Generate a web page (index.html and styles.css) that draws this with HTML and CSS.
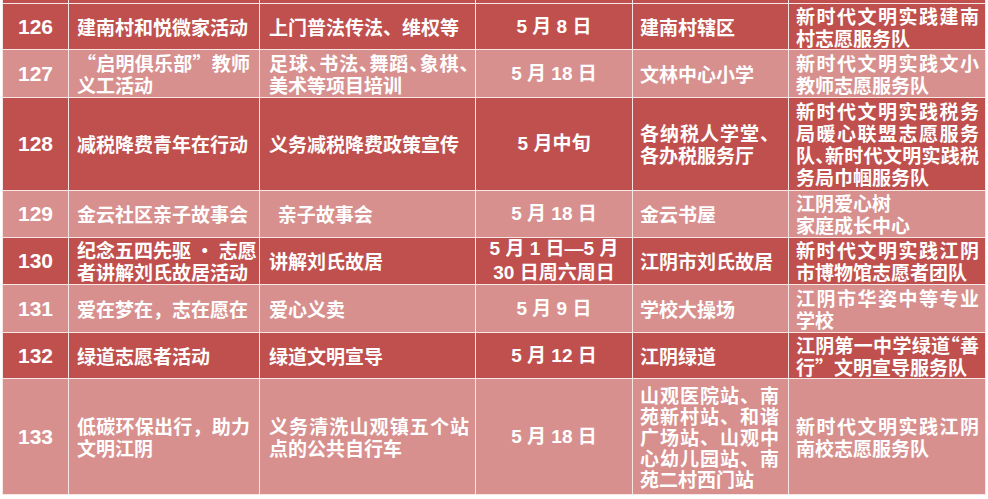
FILE: index.html
```html
<!DOCTYPE html>
<html lang="zh-CN">
<head>
<meta charset="utf-8">
<title>志愿服务活动安排</title>
<link rel="stylesheet" href="styles.css">
</head>
<body>
<div class="tbl">
  <div class="row dk top">
    <div class="c"></div><div class="c"></div><div class="c"></div><div class="c"></div><div class="c"></div><div class="c"></div>
  </div>

  <div class="row dk">
    <div class="c num">126</div>
    <div class="c c2"><div class="t"><span class="ln">建南村和悦微家活动</span></div></div>
    <div class="c c3"><div class="t"><span class="ln">上门普法传法、维权等</span></div></div>
    <div class="c date"><div class="t"><span class="ln">5 月 8 日</span></div></div>
    <div class="c c5"><div class="t"><span class="ln">建南村辖区</span></div></div>
    <div class="c c6"><div class="t"><span class="ln jl">新时代文明实践建南</span><span class="ln">村志愿服务队</span></div></div>
  </div>

  <div class="row lt">
    <div class="c num">127</div>
    <div class="c c2"><div class="t"><span class="ln jl">“启明俱乐部”教师</span><span class="ln">义工活动</span></div></div>
    <div class="c c3"><div class="t"><span class="ln jl hw">足球、书法、舞蹈、象棋、</span><span class="ln">美术等项目培训</span></div></div>
    <div class="c date"><div class="t"><span class="ln">5 月 18 日</span></div></div>
    <div class="c c5"><div class="t"><span class="ln">文林中心小学</span></div></div>
    <div class="c c6"><div class="t"><span class="ln jl">新时代文明实践文小</span><span class="ln">教师志愿服务队</span></div></div>
  </div>

  <div class="row dk">
    <div class="c num">128</div>
    <div class="c c2"><div class="t"><span class="ln">减税降费青年在行动</span></div></div>
    <div class="c c3"><div class="t"><span class="ln">义务减税降费政策宣传</span></div></div>
    <div class="c date"><div class="t"><span class="ln">5 月中旬</span></div></div>
    <div class="c c5"><div class="t"><span class="ln jl">各纳税人学堂、</span><span class="ln">各办税服务厅</span></div></div>
    <div class="c c6"><div class="t"><span class="ln jl">新时代文明实践税务</span><span class="ln jl">局暖心联盟志愿服务</span><span class="ln jl hw">队、新时代文明实践税</span><span class="ln">务局巾帼服务队</span></div></div>
  </div>

  <div class="row lt">
    <div class="c num">129</div>
    <div class="c c2"><div class="t"><span class="ln">金云社区亲子故事会</span></div></div>
    <div class="c c3"><div class="t"><span class="ln">&nbsp;&nbsp;亲子故事会</span></div></div>
    <div class="c date"><div class="t"><span class="ln">5 月 18 日</span></div></div>
    <div class="c c5"><div class="t"><span class="ln">金云书屋</span></div></div>
    <div class="c c6"><div class="t"><span class="ln">江阴爱心树</span><span class="ln">家庭成长中心</span></div></div>
  </div>

  <div class="row dk">
    <div class="c num">130</div>
    <div class="c c2"><div class="t"><span class="ln jl">纪念五四先驱 · 志愿</span><span class="ln">者讲解刘氏故居活动</span></div></div>
    <div class="c c3"><div class="t"><span class="ln">讲解刘氏故居</span></div></div>
    <div class="c date"><div class="t tall"><span class="ln">5 月 1 日—5 月</span><span class="ln">30 日周六周日</span></div></div>
    <div class="c c5"><div class="t"><span class="ln">江阴市刘氏故居</span></div></div>
    <div class="c c6"><div class="t"><span class="ln jl">新时代文明实践江阴</span><span class="ln">市博物馆志愿者团队</span></div></div>
  </div>

  <div class="row lt">
    <div class="c num">131</div>
    <div class="c c2"><div class="t"><span class="ln">爱在梦在，志在愿在</span></div></div>
    <div class="c c3"><div class="t"><span class="ln">爱心义卖</span></div></div>
    <div class="c date"><div class="t"><span class="ln">5 月 9 日</span></div></div>
    <div class="c c5"><div class="t"><span class="ln">学校大操场</span></div></div>
    <div class="c c6"><div class="t"><span class="ln jl">江阴市华姿中等专业</span><span class="ln">学校</span></div></div>
  </div>

  <div class="row dk">
    <div class="c num">132</div>
    <div class="c c2"><div class="t"><span class="ln">绿道志愿者活动</span></div></div>
    <div class="c c3"><div class="t"><span class="ln">绿道文明宣导</span></div></div>
    <div class="c date"><div class="t"><span class="ln">5 月 12 日</span></div></div>
    <div class="c c5"><div class="t"><span class="ln">江阴绿道</span></div></div>
    <div class="c c6"><div class="t"><span class="ln jl hw">江阴第一中学绿道“善</span><span class="ln">行”文明宣导服务队</span></div></div>
  </div>

  <div class="row lt">
    <div class="c num">133</div>
    <div class="c c2"><div class="t"><span class="ln jl">低碳环保出行，助力</span><span class="ln">文明江阴</span></div></div>
    <div class="c c3"><div class="t"><span class="ln jl">义务清洗山观镇五个站</span><span class="ln">点的公共自行车</span></div></div>
    <div class="c date"><div class="t"><span class="ln">5 月 18 日</span></div></div>
    <div class="c c5"><div class="t dense"><span class="ln jl">山观医院站、南</span><span class="ln jl">苑新村站、和谐</span><span class="ln jl">广场站、山观中</span><span class="ln jl">心幼儿园站、南</span><span class="ln">苑二村西门站</span></div></div>
    <div class="c c6"><div class="t"><span class="ln jl">新时代文明实践江阴</span><span class="ln">南校志愿服务队</span></div></div>
  </div>
</div>
</body>
</html>
```

FILE: styles.css
```css
html, body {
  margin: 0;
  padding: 0;
  background: #ffffff;
}

.tbl {
  display: grid;
  grid-template-columns: 65px 190px 215px 156px 155px 196px;
  grid-template-rows: 3px 45px 47px 92px 46px 46px 47px 45px 115px;
  gap: 1px;
  width: max-content;
  margin-left: 2px;
  padding: 0 1px 1px 1px;
  background: #f6e7e7;
  font-family: "Noto Sans CJK SC", "Liberation Sans", sans-serif;
  font-weight: 700;
  font-size: 19px;
  color: #ffffff;
}

.row {
  display: contents;
}

.dk .c {
  background: #c0504e;
}

.lt .c {
  background: #d7908e;
}

.c {
  display: flex;
  align-items: center;
  min-width: 0;
  box-sizing: border-box;
}

.t {
  width: 100%;
  line-height: 22px;
}

.t.tall {
  line-height: 24px;
}

.t.dense {
  line-height: 21px;
}

.ln {
  display: block;
  white-space: nowrap;
}

.jl {
  text-align: justify;
  text-align-last: justify;
}

.hw {
  font-feature-settings: "halt";
}

.num {
  justify-content: center;
  font-family: "Liberation Sans", "Noto Sans CJK SC", sans-serif;
  font-size: 21px;
}

.date {
  justify-content: center;
  text-align: center;
  font-family: "Liberation Sans", "Noto Sans CJK SC", sans-serif;
}

.c2 {
  padding: 0 9px 0 8px;
}

.c3 {
  padding: 0 6px 0 9px;
}

.c5 {
  padding: 0 9px 0 7px;
}

.c6 {
  padding: 0 6px 0 7px;
}
```
